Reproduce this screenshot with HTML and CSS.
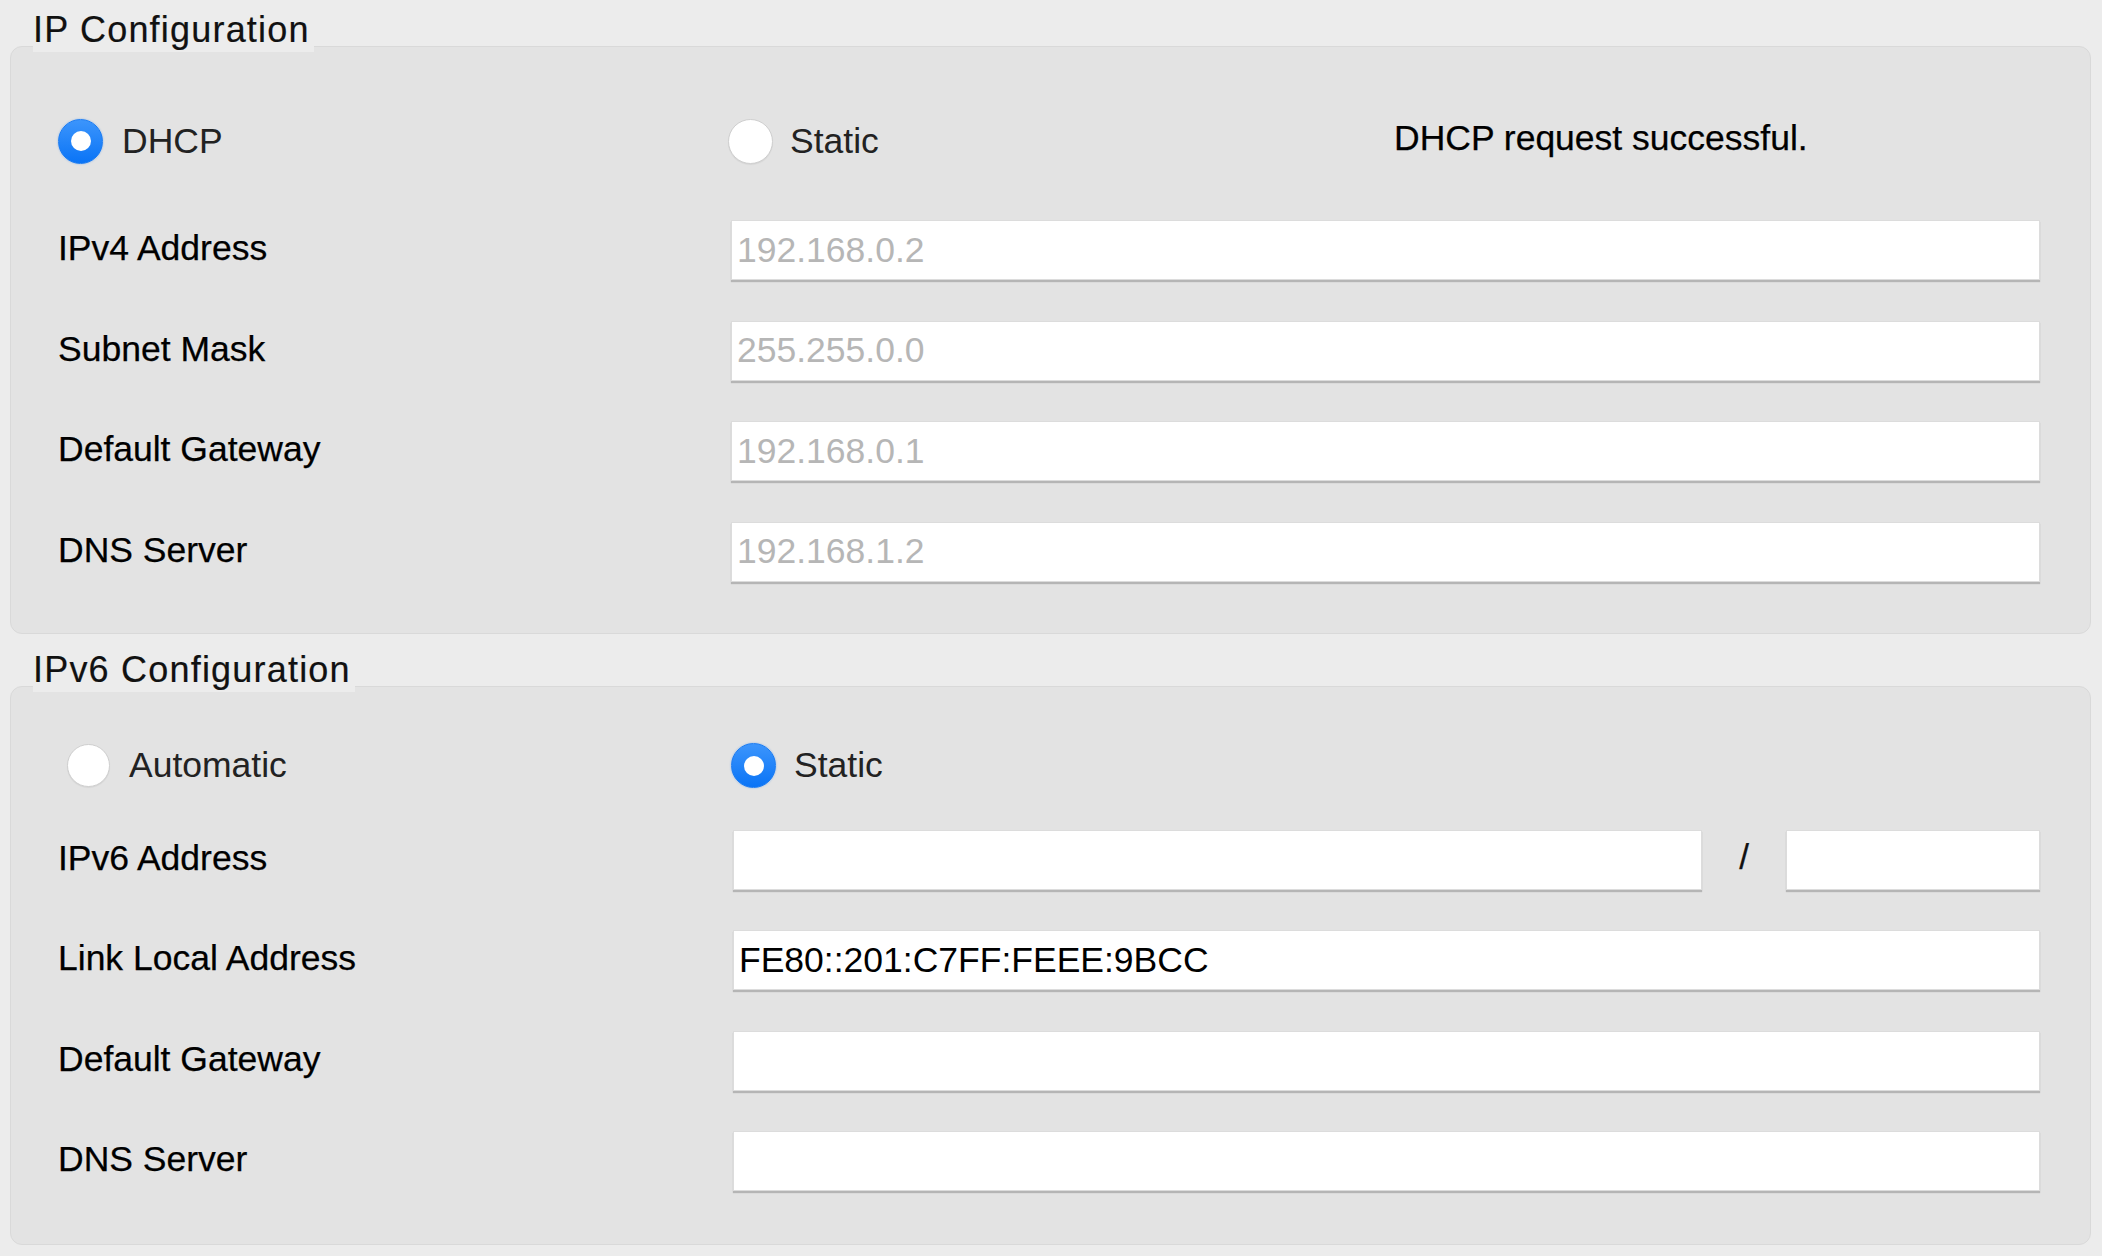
FILE: index.html
```html
<!DOCTYPE html>
<html lang="en">
<head>
<meta charset="utf-8">
<title>IP Configuration</title>
<link rel="stylesheet" href="styles.css">
</head>
<body>
<div class="page">
  <section class="group group-ipv4">
    <div class="legend">IP Configuration</div>
    <div class="box box-ipv4">
      <div class="choice-row">
        <div class="radio-opt"><span class="radio checked"></span><span>DHCP</span></div>
        <div class="radio-opt opt-static"><span class="radio"></span><span>Static</span></div>
        <div class="status">DHCP request successful.</div>
      </div>
      <div class="fields">
        <div class="label">IPv4 Address</div>
        <div class="input disabled">192.168.0.2</div>
        <div class="label">Subnet Mask</div>
        <div class="input disabled">255.255.0.0</div>
        <div class="label">Default Gateway</div>
        <div class="input disabled">192.168.0.1</div>
        <div class="label">DNS Server</div>
        <div class="input disabled">192.168.1.2</div>
      </div>
    </div>
  </section>
  <section class="group group-ipv6">
    <div class="legend">IPv6 Configuration</div>
    <div class="box box-ipv6">
      <div class="choice-row">
        <div class="radio-opt opt-auto"><span class="radio small"></span><span>Automatic</span></div>
        <div class="radio-opt opt-static6"><span class="radio checked"></span><span>Static</span></div>
        <div></div>
      </div>
      <div class="fields">
        <div class="label">IPv6 Address</div>
        <div class="addr-pair">
          <div class="input grow"></div>
          <div class="slash">/</div>
          <div class="input prefix"></div>
        </div>
        <div class="label">Link Local Address</div>
        <div class="input">FE80::201:C7FF:FEEE:9BCC</div>
        <div class="label">Default Gateway</div>
        <div class="input"></div>
        <div class="label">DNS Server</div>
        <div class="input"></div>
      </div>
    </div>
  </section>
</div>
</body>
</html>
```

FILE: styles.css
```css
html, body {
  margin: 0;
  padding: 0;
  background: #ececec;
}

body {
  font-family: "Liberation Sans", Arial, Helvetica, sans-serif;
  color: #1a1a1a;
  width: 2102px;
  height: 1256px;
  overflow: hidden;
}

.page {
  padding: 8px 11px 0 10px;
}

.legend {
  position: relative;
  z-index: 1;
  display: inline-block;
  margin-left: 23px;
  margin-bottom: -8px;
  height: 44px;
  line-height: 44px;
  font-size: 36px;
  letter-spacing: 1.2px;
  background: #ececec;
  color: #111;
  padding-right: 4px;
  -webkit-text-stroke: 0.2px #111;
}

.group-ipv6 .legend {
  margin-top: 14px;
}

.box {
  position: relative;
  background: #e3e3e3;
  border: 1px solid #d9d9d9;
  border-radius: 12px;
  padding: 64px 50px 51px 47px;
}

.box-ipv6 {
  padding: 49px 50px 53px 47px;
}

.choice-row {
  display: grid;
  grid-template-columns: 673px 663px 1fr;
  height: 60px;
  align-items: center;
}

.radio-opt {
  display: flex;
  align-items: center;
  gap: 19px;
  font-size: 35.5px;
  color: #222;
}

.opt-static {
  margin-left: -3px;
  gap: 17px;
}

.opt-auto {
  margin-left: 9px;
}

.opt-static6 {
  gap: 18px;
}

.radio {
  flex: none;
  width: 45px;
  height: 45px;
  box-sizing: border-box;
  border-radius: 50%;
  background: #fff;
  border: 1px solid #cfcfcf;
  box-shadow: 0 1px 1px rgba(0, 0, 0, 0.06);
}

.radio.small {
  width: 43px;
  height: 43px;
}

.radio.checked {
  display: grid;
  place-items: center;
  background: linear-gradient(#3c95fc, #0a74f6);
  border-color: #1b7cf3;
  box-shadow: 0 0 2px rgba(10, 116, 246, 0.45);
}

.radio.checked::after {
  content: "";
  width: 20px;
  height: 20px;
  border-radius: 50%;
  background: #fff;
}

.status {
  font-size: 35.5px;
  color: #000;
  padding-bottom: 6px;
  -webkit-text-stroke: 0.25px #000;
}

.fields {
  display: grid;
  grid-template-columns: 673px 1fr;
  row-gap: 40.5px;
  align-items: center;
  margin-top: 49px;
}

.box-ipv6 .fields {
  margin-top: 34px;
}

.label {
  font-size: 35.5px;
  color: #000;
  padding-bottom: 3px;
  -webkit-text-stroke: 0.25px #000;
}

.input {
  height: 60px;
  box-sizing: border-box;
  background: #fff;
  border: 1px solid #dcdcdc;
  box-shadow: 0 2px 1px rgba(0, 0, 0, 0.2);
  font-size: 35.5px;
  color: #000;
  padding-left: 5px;
  display: flex;
  align-items: center;
  white-space: nowrap;
}

.box-ipv6 .fields > .input,
.box-ipv6 .addr-pair {
  margin-left: 2px;
}

.input.disabled {
  color: #b6b6b6;
}

.addr-pair {
  display: flex;
  align-items: center;
}

.input.grow {
  flex: 1;
}

.input.prefix {
  width: 254px;
}

.slash {
  width: 84px;
  text-align: center;
  font-size: 35px;
  color: #111;
  padding-bottom: 6px;
  -webkit-text-stroke: 0.25px #111;
}
```
